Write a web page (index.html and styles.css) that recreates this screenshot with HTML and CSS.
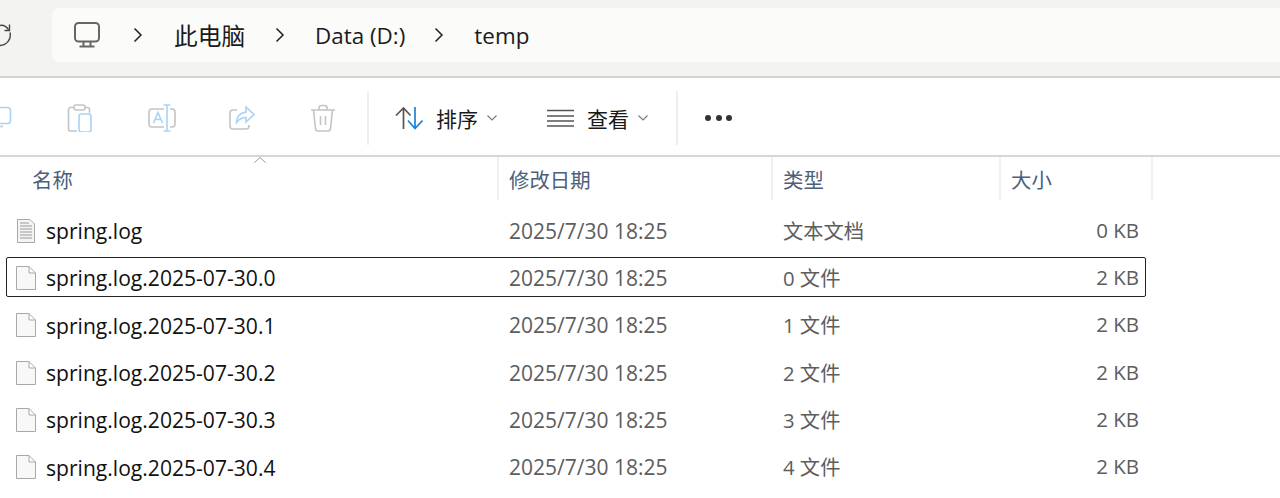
FILE: index.html
```html
<!DOCTYPE html>
<html lang="zh-CN">
<head>
    <meta charset="UTF-8">
    <title>temp</title>
    <link rel="stylesheet" href="styles.css">
</head>
<body>
    <header class="addressbar">
        <svg class="refresh" width="12" height="24" viewBox="0 0 12 24" fill="none" stroke="#444" stroke-width="1.400">
            <path d="M0 2.500C3 1.800 6 3 8.500 6.500"/>
            <path d="M9.500 1.500V7.500H4.500"/>
            <path d="M10 9.500A10.500 10.500 0 0 1 0 22.500"/>
        </svg>
        <nav class="crumbs">
            <svg class="pc-icon" width="28" height="28" viewBox="0 0 28 28" fill="none" stroke="#666" stroke-width="2">
                <rect x="2" y="2" width="24" height="18.500" rx="3.500"/>
                <path d="M10.500 21v4M17.500 21v4M6.500 25.500h15"/>
            </svg>
            <svg class="chev" width="10" height="16" viewBox="0 0 10 16" fill="none" stroke="#222" stroke-width="1.500"><path d="M1.500 1.500L8 8L1.500 14.500"/></svg>
            <span class="crumb crumb-cn">此电脑</span>
            <svg class="chev" width="10" height="16" viewBox="0 0 10 16" fill="none" stroke="#222" stroke-width="1.500"><path d="M1.500 1.500L8 8L1.500 14.500"/></svg>
            <span class="crumb">Data (D:)</span>
            <svg class="chev" width="10" height="16" viewBox="0 0 10 16" fill="none" stroke="#222" stroke-width="1.500"><path d="M1.500 1.500L8 8L1.500 14.500"/></svg>
            <span class="crumb">temp</span>
        </nav>
    </header>

    <section class="toolbar">
        <div class="tool-icons">
            <svg width="12" height="28" viewBox="0 0 12 28" fill="none" stroke="#a9d3f5" stroke-width="1.600">
                <path d="M0 3.500h7.500a3 3 0 0 1 3 3v10a3 3 0 0 1-3 3H0"/>
                <path d="M0 22.500h3" stroke="#c8c8c8"/>
            </svg>
            <svg width="26" height="28" viewBox="0 0 26 28" fill="none" stroke="#c4c4c4" stroke-width="1.600">
                <path d="M7 3.500H3.500a2 2 0 0 0-2 2V25a2 2 0 0 0 2 2H10"/>
                <path d="M18 3.500h2.500a2 2 0 0 1 2 2V9"/>
                <rect x="7" y="1" width="11" height="5" rx="2"/>
                <rect x="12" y="10" width="12" height="18" rx="2.500" stroke="#a9d3f5"/>
            </svg>
            <svg width="28" height="28" viewBox="0 0 28 28" fill="none" stroke="#c4c4c4" stroke-width="1.600">
                <path d="M16 5H4a3 3 0 0 0-3 3v12a3 3 0 0 0 3 3h12"/>
                <path d="M22 5h2a3 3 0 0 1 3 3v12a3 3 0 0 1-3 3h-2"/>
                <path d="M19 1v26M15.500 1h7M15.500 27h7M5.500 19L10 8.500L14.500 19M7 15.500h6" stroke="#a9d3f5"/>
            </svg>
            <svg class="share-icon" width="26" height="28" viewBox="0 0 26 28" fill="none" stroke="#c4c4c4" stroke-width="1.600">
                <path d="M8 6H4a3 3 0 0 0-3 3v13a3 3 0 0 0 3 3h13a3 3 0 0 0 3-3v-1"/>
                <path d="M17 3l8 7.500l-8 7.500v-4.500c-4.500 0-7 1.500-9.500 5c0-6 3.500-9.500 9.500-10.500z" stroke="#a9d3f5"/>
            </svg>
            <svg width="26" height="28" viewBox="0 0 26 28" fill="none" stroke="#c4c4c4" stroke-width="1.600">
                <path d="M1 6h24M9 6V4a2.500 2.500 0 0 1 2.500-2.500h3A2.500 2.500 0 0 1 17 4v2"/>
                <path d="M3.500 6l2 19a2.500 2.500 0 0 0 2.500 2h10a2.500 2.500 0 0 0 2.500-2l2-19"/>
                <path d="M10.500 12v9M15.500 12v9"/>
            </svg>
        </div>
        <div class="divider"></div>
        <div class="tool-btn sort-btn">
            <svg width="28" height="24" viewBox="0 0 28 24" fill="none" stroke-width="1.700">
                <path d="M1 9.500L8.500 2L15.500 9.500M8.500 2v21" stroke="#555"/>
                <path d="M13 14.500L20 22.500L27.500 14.500M20 22V1" stroke="#1a82d8"/>
            </svg>
            <span>排序</span>
            <svg class="caret" width="10" height="6" viewBox="0 0 10 6" fill="none" stroke="#777" stroke-width="1.100"><path d="M.5.500L5 5L9.500.500"/></svg>
        </div>
        <div class="tool-btn view-btn">
            <svg width="27" height="18" viewBox="0 0 27 18" fill="none" stroke="#555" stroke-width="1.400">
                <path d="M0 1.500h27M0 7h27M0 12h27M0 17h27"/>
            </svg>
            <span>查看</span>
            <svg class="caret" width="10" height="6" viewBox="0 0 10 6" fill="none" stroke="#777" stroke-width="1.100"><path d="M.5.500L5 5L9.500.500"/></svg>
        </div>
        <div class="divider"></div>
        <div class="more"><i></i><i></i><i></i></div>
    </section>

    <section class="filelist">
        <div class="sort-mark">
            <svg width="12" height="6" viewBox="0 0 12 6" fill="none" stroke="#999" stroke-width="1"><path d="M.5 5.500L6 .500L11.500 5.500"/></svg>
        </div>
        <div class="cols">
            <div class="col name-col">名称</div>
            <div class="col">修改日期</div>
            <div class="col">类型</div>
            <div class="col">大小</div>
        </div>

        <div class="row">
            <div class="file-name">
                <svg width="20" height="24" viewBox="0 0 20 24" fill="#f4f4f4" stroke="#a8a8a8" stroke-width="1">
                    <path d="M1.500 .500H14L18.500 5V23.500H1.500z"/>
                    <path d="M4 4h9M4 7h12M4 10h12M4 13h12M4 16h12M4 19h12" stroke="#9a9a9a"/>
                </svg>
                <span>spring.log</span>
            </div>
            <div class="cell date">2025/7/30 18:25</div>
            <div class="cell type">文本文档</div>
            <div class="cell size">0 KB</div>
        </div>
        <div class="row focused">
            <div class="file-name">
                <svg width="20" height="24" viewBox="0 0 20 24" fill="#f8f8f8" stroke="#a8a8a8" stroke-width="1"><path d="M.500 .500H13L19.500 7V23.500H.500zM13 .500V7H19.500"/></svg>
                <span>spring.log.2025-07-30.0</span>
            </div>
            <div class="cell date">2025/7/30 18:25</div>
            <div class="cell type">0 文件</div>
            <div class="cell size">2 KB</div>
        </div>
        <div class="row">
            <div class="file-name">
                <svg width="20" height="24" viewBox="0 0 20 24" fill="#f8f8f8" stroke="#a8a8a8" stroke-width="1"><path d="M.500 .500H13L19.500 7V23.500H.500zM13 .500V7H19.500"/></svg>
                <span>spring.log.2025-07-30.1</span>
            </div>
            <div class="cell date">2025/7/30 18:25</div>
            <div class="cell type">1 文件</div>
            <div class="cell size">2 KB</div>
        </div>
        <div class="row">
            <div class="file-name">
                <svg width="20" height="24" viewBox="0 0 20 24" fill="#f8f8f8" stroke="#a8a8a8" stroke-width="1"><path d="M.500 .500H13L19.500 7V23.500H.500zM13 .500V7H19.500"/></svg>
                <span>spring.log.2025-07-30.2</span>
            </div>
            <div class="cell date">2025/7/30 18:25</div>
            <div class="cell type">2 文件</div>
            <div class="cell size">2 KB</div>
        </div>
        <div class="row">
            <div class="file-name">
                <svg width="20" height="24" viewBox="0 0 20 24" fill="#f8f8f8" stroke="#a8a8a8" stroke-width="1"><path d="M.500 .500H13L19.500 7V23.500H.500zM13 .500V7H19.500"/></svg>
                <span>spring.log.2025-07-30.3</span>
            </div>
            <div class="cell date">2025/7/30 18:25</div>
            <div class="cell type">3 文件</div>
            <div class="cell size">2 KB</div>
        </div>
        <div class="row">
            <div class="file-name">
                <svg width="20" height="24" viewBox="0 0 20 24" fill="#f8f8f8" stroke="#a8a8a8" stroke-width="1"><path d="M.500 .500H13L19.500 7V23.500H.500zM13 .500V7H19.500"/></svg>
                <span>spring.log.2025-07-30.4</span>
            </div>
            <div class="cell date">2025/7/30 18:25</div>
            <div class="cell type">4 文件</div>
            <div class="cell size">2 KB</div>
        </div>
    </section>
</body>
</html>
```

FILE: styles.css
```css
html, body {
    height: 100%;
}
body {
    font-family: "Open Sans", "Noto Sans CJK SC", sans-serif;
    background-color: #fff;
    color: #1a1a1a;
    margin: 0;
    padding: 0;
    overflow: hidden;
}
svg {
    display: block;
    flex: none;
}

.addressbar {
    display: flex;
    align-items: flex-start;
    height: 68px;
    padding-top: 8px;
    background-color: #f3f3f1;
    border-bottom: 2px solid #d2d2ce;
}
.refresh {
    margin-top: 15px;
}
.crumbs {
    display: flex;
    align-items: center;
    flex: 1;
    height: 54px;
    margin-left: 40px;
    padding-left: 21px;
    background-color: #fbfbf9;
    border-radius: 8px 0 0 8px;
    font-size: 22.4px;
}
.chev {
    margin-left: 29px;
}
.pc-icon + .chev {
    margin-left: 32px;
}
.crumb-cn + .chev {
    margin-left: 30px;
}
.crumb {
    margin-left: 30px;
}
.crumb-cn {
    margin-left: 31px;
    font-size: 23.7px;
}

.toolbar {
    display: flex;
    align-items: center;
    height: 75px;
    padding-top: 2px;
    background-color: #fff;
    border-bottom: 2px solid #d6d6d2;
}
.tool-icons {
    display: flex;
    align-items: center;
    gap: 55px;
    width: 367px;
}
.share-icon {
    margin-left: -2px;
}
.divider {
    width: 2px;
    height: 54px;
    background-color: #eeeeec;
}
.tool-btn {
    display: flex;
    align-items: center;
    font-size: 21px;
}
.sort-btn {
    margin-left: 26px;
    width: 152px;
}
.view-btn {
    width: 129px;
}
.sort-btn span {
    margin-left: 13px;
}
.view-btn span {
    margin-left: 13px;
}
.caret {
    margin-left: 9px;
}
.more {
    display: flex;
    gap: 4.500px;
    margin-left: 27px;
}
.more i {
    width: 6px;
    height: 6px;
    border-radius: 50%;
    background-color: #333;
}

.filelist {
    position: relative;
}
.sort-mark {
    position: absolute;
    left: 254px;
    top: 0;
}
.cols, .row {
    display: grid;
}
.cols {
    grid-template-columns: 499px 274px 228px 152px;
    height: 43px;
    margin-bottom: 7px;
}
.row {
    grid-template-columns: 498px 274px 228px 152px;
    position: relative;
    height: 47.300px;
    align-items: center;
}
.col {
    display: flex;
    align-items: center;
    padding-left: 10px;
    font-size: 20.400px;
    color: #4c607a;
    border-right: 2px solid #f0f0f0;
}
.col.name-col {
    padding-left: 32px;
}
.row.focused::after {
    content: "";
    position: absolute;
    left: 6px;
    top: 3px;
    width: 1140px;
    height: 40px;
    box-sizing: border-box;
    border: 1px solid #222;
    border-radius: 2px;
}
.file-name {
    display: flex;
    align-items: center;
    gap: 10px;
    padding-left: 16px;
    font-size: 21.100px;
    color: #111;
}
.cell {
    padding-left: 11px;
    color: #5d5d5d;
}
.date {
    font-size: 21px;
}
.type {
    font-size: 20.300px;
    padding-bottom: 2px;
}
.size {
    font-size: 20.500px;
    padding-right: 13px;
    padding-bottom: 2px;
    text-align: right;
}
```
